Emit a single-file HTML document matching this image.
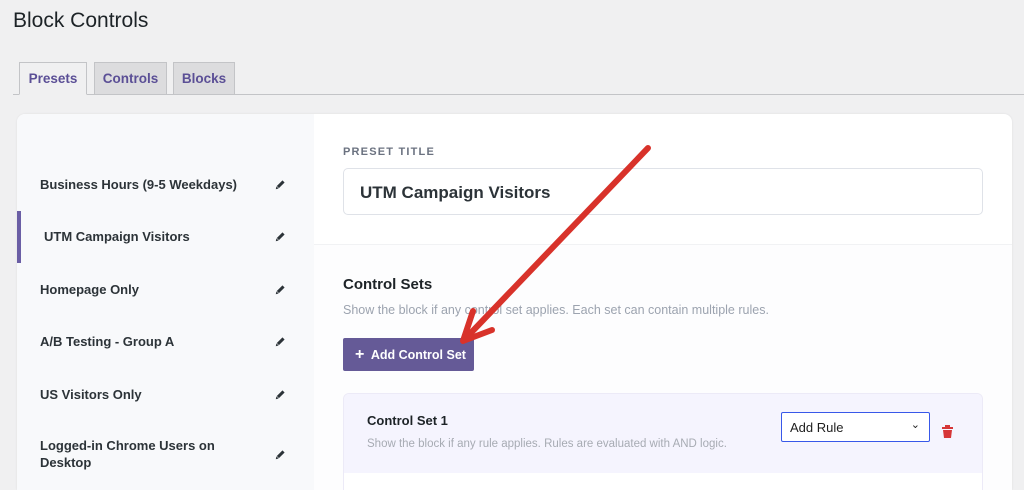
<!DOCTYPE html>
<html><head><style>
*{box-sizing:border-box;margin:0;padding:0}
html,body{width:1024px;height:490px;overflow:hidden}
body{background:#f0f0f1;font-family:"Liberation Sans",sans-serif;color:#1e1e1e;position:relative}
h1{position:absolute;left:13px;top:9px;font-size:21px;font-weight:400;color:#1d2327}
.tabs{position:absolute;left:13px;top:94px;width:1011px;border-top:1px solid #c3c4c7}
.tab{position:absolute;top:62px;height:33px;border:1px solid #c3c4c7;background:#dcdcde;font-size:13.5px;font-weight:700;color:#5b4f96;text-align:center;line-height:31px}
.card{position:absolute;left:17px;top:114px;width:995px;height:376px;background:#fff;border-radius:8px 8px 0 0;overflow:hidden;box-shadow:0 0 2px rgba(0,0,0,.08)}
.side{position:absolute;left:0;top:0;width:297px;height:376px;background:#f8f9fb}
.item{position:absolute;left:40px;font-size:13px;font-weight:700;color:#2c3338;width:200px;line-height:17px}
.lbl{position:absolute;left:343px;top:146px;font-size:11px;font-weight:700;letter-spacing:1.2px;color:#6b7280}
.inp{position:absolute;left:343px;top:168px;width:640px;height:47px;border:1px solid #dfe2e8;border-radius:5px;font-size:17px;font-weight:700;color:#2c3338;padding:14px 0 0 16px}
</style></head><body>
<h1>Block Controls</h1>
<div class="tabs"></div>
<div class="tab" style="left:19px;width:68px;background:#f0f0f1;border-bottom-color:#f0f0f1">Presets</div>
<div class="tab" style="left:94px;width:73px">Controls</div>
<div class="tab" style="left:173px;width:62px">Blocks</div>
<div class="card">
 <div class="side"></div>
 <div style="position:absolute;left:297px;top:130px;width:698px;height:1px;background:#f1f2f4"></div>
 <div style="position:absolute;left:297px;top:131px;width:698px;height:245px;background:#fdfdfe"></div>
 <div style="position:absolute;left:0;top:97px;width:4px;height:52px;background:#6a5ea5"></div>
</div>
<div class="item" style="top:176px;white-space:nowrap;width:auto">Business Hours (9-5 Weekdays)</div>
<div class="item" style="top:228px;left:44px">UTM Campaign Visitors</div>
<div class="item" style="top:281px">Homepage Only</div>
<div class="item" style="top:333px">A/B Testing - Group A</div>
<div class="item" style="top:386px">US Visitors Only</div>
<div class="item" style="top:437px">Logged-in Chrome Users on Desktop</div>
<svg width="1024" height="490" style="position:absolute;left:0;top:0">
 <g fill="#2c3338">
 <g transform="translate(280,185) rotate(45)"><rect x="-1.5" y="-5" width="3" height="8"/><path d="M-1.5 3.5 L1.5 3.5 L0 6Z"/></g>
 <g transform="translate(280,237) rotate(45)"><rect x="-1.5" y="-5" width="3" height="8"/><path d="M-1.5 3.5 L1.5 3.5 L0 6Z"/></g>
 <g transform="translate(280,290) rotate(45)"><rect x="-1.5" y="-5" width="3" height="8"/><path d="M-1.5 3.5 L1.5 3.5 L0 6Z"/></g>
 <g transform="translate(280,342) rotate(45)"><rect x="-1.5" y="-5" width="3" height="8"/><path d="M-1.5 3.5 L1.5 3.5 L0 6Z"/></g>
 <g transform="translate(280,395) rotate(45)"><rect x="-1.5" y="-5" width="3" height="8"/><path d="M-1.5 3.5 L1.5 3.5 L0 6Z"/></g>
 <g transform="translate(280,455) rotate(45)"><rect x="-1.5" y="-5" width="3" height="8"/><path d="M-1.5 3.5 L1.5 3.5 L0 6Z"/></g>
 </g>
</svg>
<div class="lbl">PRESET TITLE</div>
<div class="inp">UTM Campaign Visitors</div>
<div style="position:absolute;left:343px;top:276px;font-size:15px;font-weight:700;color:#1d2327">Control Sets</div>
<div style="position:absolute;left:343px;top:303px;font-size:12.5px;color:#9ca3af">Show the block if any control set applies. Each set can contain multiple rules.</div>
<div style="position:absolute;left:343px;top:338px;width:131px;height:33px;background:#655a97;border-radius:2px;color:#fff;font-size:12.5px;font-weight:700;line-height:33px;padding-left:12px"><span style="font-size:16px">+</span>&nbsp; Add Control Set</div>
<div style="position:absolute;left:343px;top:393px;width:640px;height:97px;border:1px solid #eceaf7;border-bottom:none;border-radius:6px 6px 0 0;background:#fff;overflow:hidden">
 <div style="height:79px;background:#f5f4fe"></div>
</div>
<div style="position:absolute;left:367px;top:413px;font-size:13px;font-weight:700;color:#1d2327">Control Set 1</div>
<div style="position:absolute;left:367px;top:438px;font-size:11.5px;color:#a7abb3">Show the block if any rule applies. Rules are evaluated with AND logic.</div>
<div style="position:absolute;left:781px;top:412px;width:149px;height:30px;border:1px solid #3858e9;background:#fff;border-radius:2px;font-size:13px;padding:7px 0 0 8px;color:#1e1e1e">Add Rule<span style="position:absolute;right:9px;top:5px;font-size:11px">&#8964;</span></div>
<svg width="1024" height="490" style="position:absolute;left:0;top:0">
 <g fill="#d63638"><rect x="942" y="427" width="11" height="2"/><rect x="945" y="425" width="5" height="2"/><path d="M943 430h9l-1 8h-7z"/></g>
 <g stroke="#d8322a" stroke-width="6" stroke-linecap="round" fill="none">
  <line x1="648" y1="148" x2="466" y2="338"/>
  <polyline points="473,311 463,341 492,330" stroke-linejoin="round"/>
 </g>
</svg>
</body></html>
